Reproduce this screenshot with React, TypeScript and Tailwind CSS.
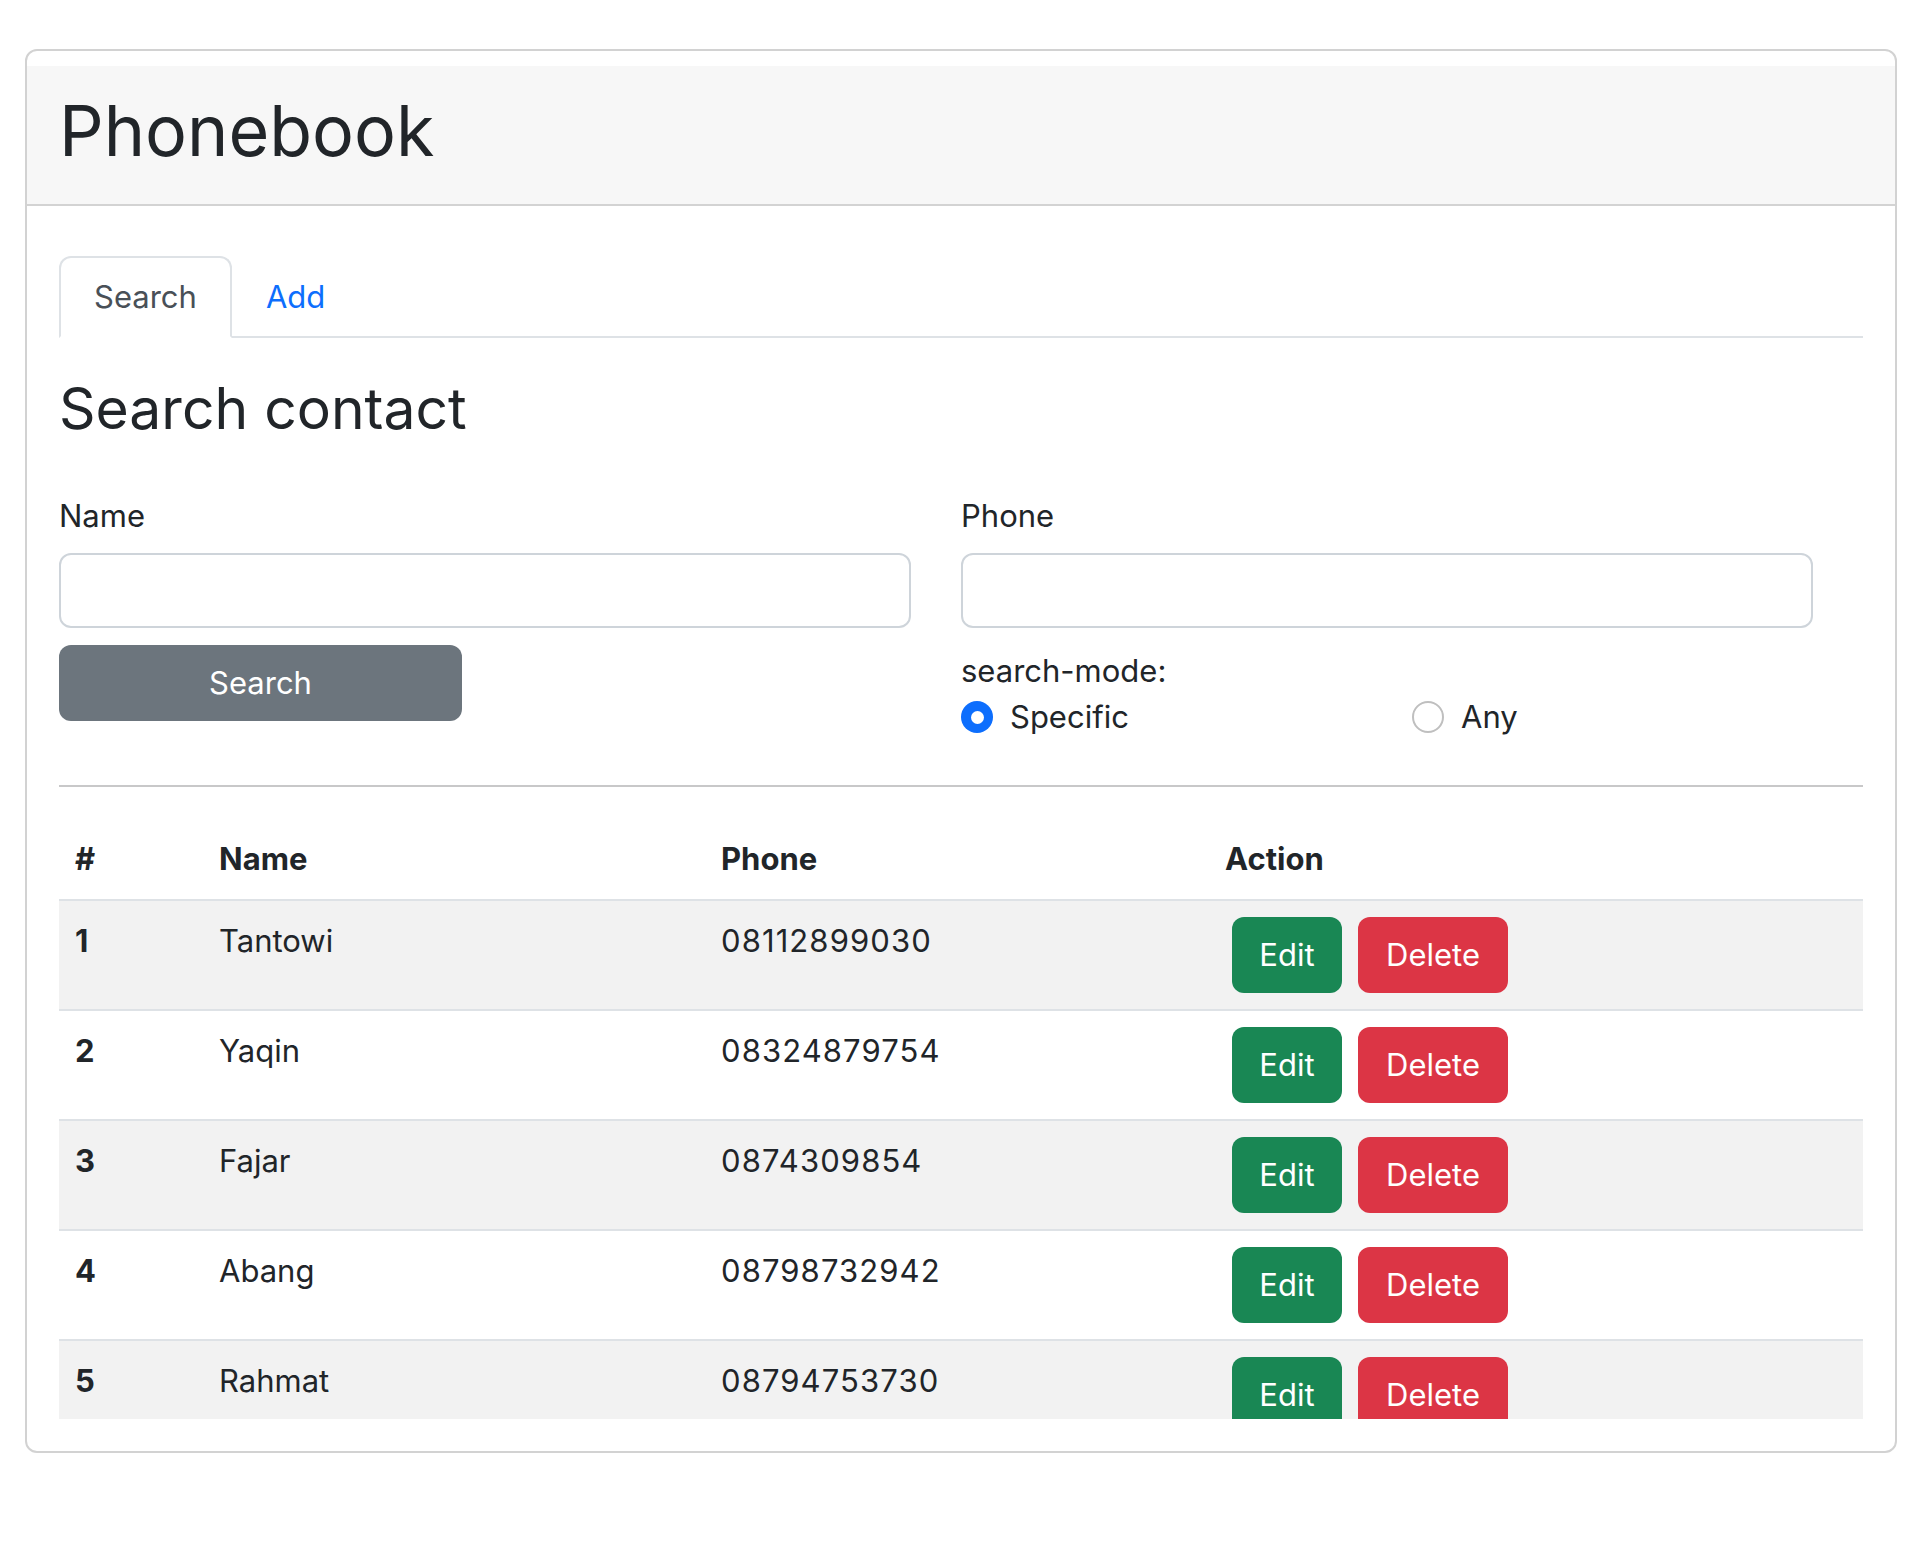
const contacts = [
  { id: 1, name: 'Tantowi', phone: '08112899030' },
  { id: 2, name: 'Yaqin', phone: '08324879754' },
  { id: 3, name: 'Fajar', phone: '0874309854' },
  { id: 4, name: 'Abang', phone: '08798732942' },
  { id: 5, name: 'Rahmat', phone: '08794753730' },
];

export default function App() {
  return (
    <main className="min-h-screen bg-white pt-[49px] pl-[25px] font-['Inter',sans-serif] text-[31px] text-[#212529]">
      <div className="w-[1872px] rounded-[12px] border-2 border-[#d2d2d2] pt-[15px] pb-[32px]">
        {/* Header */}
        <div className="bg-[#f7f7f7] border-b-2 border-[#d3d3d3] px-[32px] pt-[22px] pb-[30px]">
          <h1 className="text-[70px] leading-[86px] font-normal">Phonebook</h1>
        </div>

        <div className="px-[32px] pt-[50px]">
          {/* Tabs */}
          <div className="flex border-b-2 border-[#dee2e6]">
            <button className="h-[82px] -mb-[2px] px-[33px] flex items-center border-2 border-[#dee2e6] border-b-white bg-white rounded-t-[12px] text-[#495057]">
              Search
            </button>
            <button className="h-[82px] -mb-[2px] px-[32px] flex items-center border-2 border-transparent text-[#0d6efd]">
              Add
            </button>
          </div>

          <h3 className="mt-[37px] text-[57px] leading-[68px] font-normal">Search contact</h3>

          {/* Form */}
          <div className="mt-[50px] grid grid-cols-2">
            <div>
              <label className="block leading-[46px]">Name</label>
              <input className="mt-[14px] block w-[852px] h-[75px] rounded-[12px] border-2 border-[#ced4da] px-[24px] outline-none" />
              <button className="mt-[17px] w-[403px] h-[76px] rounded-[12px] bg-[#6c757d] text-white">Search</button>
            </div>
            <div>
              <label className="block leading-[46px]">Phone</label>
              <input className="mt-[14px] block w-[852px] h-[75px] rounded-[12px] border-2 border-[#ced4da] px-[24px] outline-none" />
              <div className="mt-[20px] leading-[46px]">search-mode:</div>
              <div className="grid grid-cols-2 leading-[46px]">
                <label className="flex items-center gap-[17px]">
                  <span className="w-[32px] h-[32px] rounded-full bg-[#0d6efd] flex items-center justify-center">
                    <span className="w-[13px] h-[13px] rounded-full bg-white" />
                  </span>
                  Specific
                </label>
                <label className="flex items-center gap-[17px]">
                  <span className="w-[32px] h-[32px] rounded-full border-2 border-[#bfbfbf] bg-white" />
                  Any
                </label>
              </div>
            </div>
          </div>

          <hr className="mt-[45px] border-t-2 border-[#c8c8c9]" />

          {/* Table */}
          <div className="mt-[32px] h-[600px] overflow-hidden">
            <table className="w-full border-collapse text-left">
              <thead>
                <tr className="border-b-2 border-[#dee2e6]">
                  <th className="w-[144px] px-[16px] py-[16px] leading-[48px] font-bold">#</th>
                  <th className="w-[502px] px-[16px] py-[16px] leading-[48px] font-bold">Name</th>
                  <th className="w-[504px] px-[16px] py-[16px] leading-[48px] font-bold">Phone</th>
                  <th className="px-[16px] py-[16px] leading-[48px] font-bold">Action</th>
                </tr>
              </thead>
              <tbody>
                {contacts.map((c, i) => (
                  <tr key={c.id} className={i % 2 === 0 ? 'bg-[#f2f2f2] border-b-2 border-[#dee2e6]' : 'bg-white border-b-2 border-[#dee2e6]'}>
                    <th className="px-[16px] py-[16px] leading-[48px] font-bold align-top">{c.id}</th>
                    <td className="px-[16px] py-[16px] leading-[48px] align-top">{c.name}</td>
                    <td className="px-[16px] py-[16px] leading-[48px] align-top tracking-[1.1px]">{c.phone}</td>
                    <td className="px-[16px] py-[16px] align-top">
                      <div className="flex gap-[16px] pl-[7px]">
                        <button className="w-[110px] h-[76px] rounded-[12px] bg-[#198754] text-white">Edit</button>
                        <button className="w-[150px] h-[76px] rounded-[12px] bg-[#dc3545] text-white">Delete</button>
                      </div>
                    </td>
                  </tr>
                ))}
              </tbody>
            </table>
          </div>
        </div>
      </div>
    </main>
  );
}
